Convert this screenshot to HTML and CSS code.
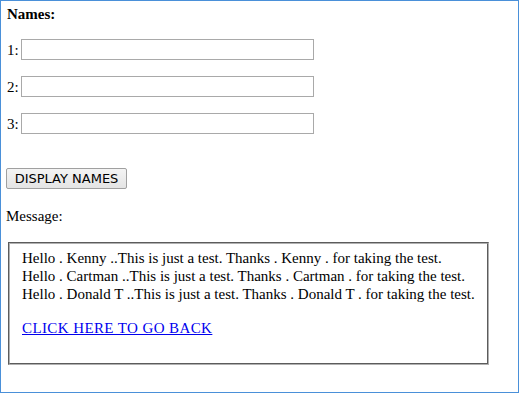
FILE: index.html
```html
<!DOCTYPE html>
<html lang="en">

<head>
    <meta charset="UTF-8">
    <meta name="viewport" content="width=device-width, initial-scale=1.0">
    <title>Names</title>
    <link rel="stylesheet" href="styles.css">
</head>

<body>
    <div class="frame">
        <!-- Names form -->
        <div class="title">Names:</div>

        <div class="name-row">
            <label for="name1">1:</label>
            <input type="text" id="name1">
        </div>
        <div class="name-row">
            <label for="name2">2:</label>
            <input type="text" id="name2">
        </div>
        <div class="name-row">
            <label for="name3">3:</label>
            <input type="text" id="name3">
        </div>

        <button class="display-btn">DISPLAY NAMES</button>

        <!-- Message output -->
        <div class="message-label">Message:</div>
        <div class="message-box">
            <div>Hello . Kenny ..This is just a test. Thanks . Kenny . for taking the test.</div>
            <div>Hello . Cartman ..This is just a test. Thanks . Cartman . for taking the test.</div>
            <div>Hello . Donald T ..This is just a test. Thanks . Donald T . for taking the test.</div>
            <a href="#" class="back-link">CLICK HERE TO GO BACK</a>
        </div>
    </div>
</body>

</html>
```

FILE: styles.css
```css
/* Page */
body {
    margin: 0;
    font-family: "Liberation Serif", "Times New Roman", serif;
    font-size: 15px;
    line-height: 18px;
    color: #000;
    background-color: #fff;
}

.frame {
    width: 517px;
    height: 391px;
    border: 1px solid #4a90d9;
    display: flex;
    flex-direction: column;
    align-items: flex-start;
}

/* Names form */
.title {
    font-weight: bold;
    margin: 4px 0 0 6px;
}

.name-row {
    display: flex;
    align-items: center;
    gap: 2px;
    margin: 16px 0 0 6px;
}

.name-row + .name-row {
    margin-top: 16px;
}

.name-row input {
    width: 287px;
    height: 19px;
    padding: 0 2px;
    border: 1px solid #a9a9a9;
    font-family: "DejaVu Sans", sans-serif;
    font-size: 13px;
    box-sizing: content-box;
}

.display-btn {
    margin: 34px 0 0 5px;
    width: 121px;
    height: 21px;
    padding: 0;
    font-family: "DejaVu Sans", sans-serif;
    font-size: 13px;
    color: #000;
    background: linear-gradient(#f4f4f4, #e4e4e4);
    border: 1px solid #a0a0a0;
    border-radius: 2px;
}

/* Message output */
.message-label {
    margin: 18px 0 0 5px;
}

.message-box {
    margin: 17px 0 0 7px;
    width: 453px;
    height: 111px;
    padding: 5px 12px 3px 12px;
    border: 2px groove #b0b0b0;
}

.back-link {
    display: inline-block;
    margin-top: 16px;
    letter-spacing: 0.4px;
    color: #0000ee;
}
```
